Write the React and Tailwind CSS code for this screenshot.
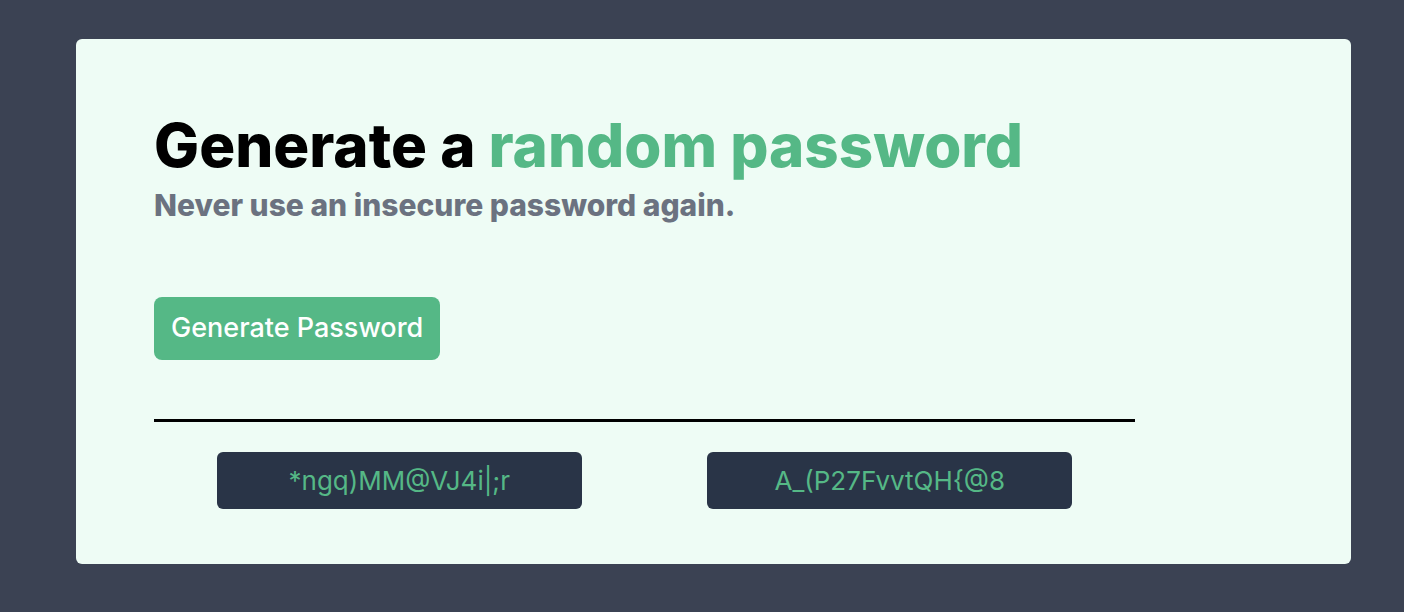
import React from 'react';

const passwords = ['*ngq)MM@VJ4i|;r', 'A_(P27FvvtQH{@8'];

const PasswordBox = ({ value }) => (
  <div className="flex justify-center">
    <div className="flex h-[57px] w-[365px] items-center justify-center rounded-md bg-[#293447] text-[26px] text-[#55b886]">
      {value}
    </div>
  </div>
);

const App = () => {
  return (
    <div className="min-h-[612px] w-full overflow-hidden bg-[#3b4253] pt-[39px] pl-[76px] font-['Inter',sans-serif]">
      <div className="h-[525px] w-[1275px] rounded-md bg-[#eefcf5] pt-[76px] pl-[78px]">
        <div className="w-[981px]">
          <h1 className="text-[60px] leading-none font-extrabold text-black">
            Generate a <span className="text-[#55b886]">random password</span>
          </h1>
          <p className="mt-[15px] text-[30px] leading-none font-extrabold text-[#6b7280]">
            Never use an insecure password again.
          </p>

          <button className="mt-[77px] h-[63px] rounded-lg bg-[#55b886] px-[17px] text-[27px] font-medium text-white">
            Generate Password
          </button>

          <div className="mt-[59px] h-[3px] w-full bg-black" />

          <div className="mt-[30px] grid grid-cols-2">
            {passwords.map((p) => (
              <PasswordBox key={p} value={p} />
            ))}
          </div>
        </div>
      </div>
    </div>
  );
};

export default App;
